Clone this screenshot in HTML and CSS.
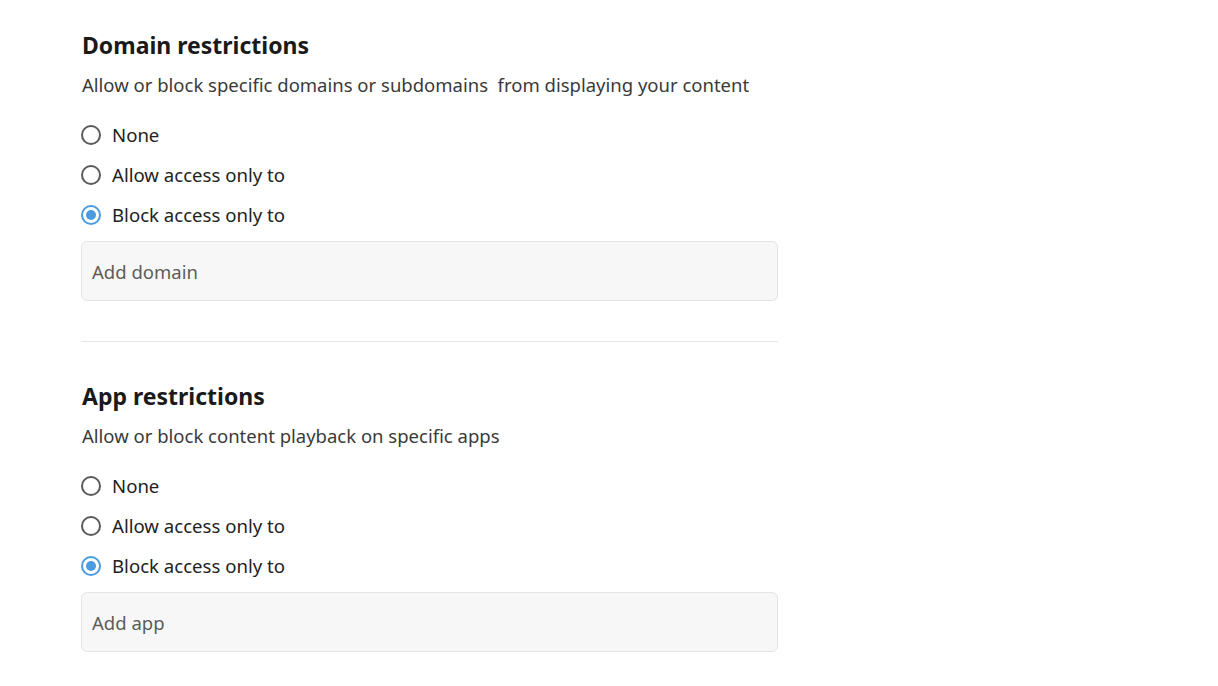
FILE: index.html
```html
<!DOCTYPE html>
<html lang="en">
<head>
<meta charset="utf-8">
<link rel="stylesheet" href="styles.css">
</head>
<body>
<main class="page">
  <section class="section">
    <h2 class="title">Domain restrictions</h2>
    <p class="desc">Allow or block specific domains or subdomains&nbsp; from displaying your content</p>
    <div class="options">
      <label class="option"><span class="radio"></span><span>None</span></label>
      <label class="option"><span class="radio"></span><span>Allow access only to</span></label>
      <label class="option"><span class="radio checked"></span><span>Block access only to</span></label>
    </div>
    <div class="field">Add domain</div>
  </section>
  <hr class="divider">
  <section class="section">
    <h2 class="title">App restrictions</h2>
    <p class="desc">Allow or block content playback on specific apps</p>
    <div class="options">
      <label class="option"><span class="radio"></span><span>None</span></label>
      <label class="option"><span class="radio"></span><span>Allow access only to</span></label>
      <label class="option"><span class="radio checked"></span><span>Block access only to</span></label>
    </div>
    <div class="field">Add app</div>
  </section>
</main>
</body>
</html>
```
FILE: styles.css
```css
html, body {
  margin: 0;
  padding: 0;
  background: #ffffff;
}
body {
  font-family: "Noto Sans", "Open Sans", sans-serif;
  color: #333;
}
.page {
  width: 697px;
  margin-left: 81px;
  padding-top: 28px;
}
.section {
  display: flex;
  flex-direction: column;
}
.title {
  margin: 0 0 0 1px;
  font-size: 23px;
  line-height: 34px;
  font-weight: 700;
  color: #1a1a1a;
}
.desc {
  margin: 9px 0 0 1px;
  font-size: 18.5px;
  line-height: 28px;
  color: #3a3a3a;
}
.options {
  display: flex;
  flex-direction: column;
  gap: 12px;
  margin-top: 22px;
}
.option {
  display: flex;
  align-items: center;
  gap: 11px;
  font-size: 18.6px;
  line-height: 28px;
  color: #222;
}
.radio {
  box-sizing: border-box;
  width: 20px;
  height: 20px;
  border: 2px solid #5a5a5a;
  border-radius: 50%;
  display: flex;
  align-items: center;
  justify-content: center;
  flex: none;
}
.radio.checked {
  border-color: #4a9be0;
}
.radio.checked::after {
  content: "";
  width: 10px;
  height: 10px;
  border-radius: 50%;
  background: #4a9be0;
}
.field {
  box-sizing: border-box;
  margin-top: 12px;
  height: 60px;
  border: 1px solid #e4e4e4;
  border-radius: 6px;
  background: #f7f7f7;
  padding: 0 10px;
  display: flex;
  align-items: center;
  font-size: 18.5px;
  color: #5c5c5c;
}
.divider {
  margin: 40px 0 37px;
  border: 0;
  border-top: 1px solid #e6e6e6;
  height: 0;
}
```
